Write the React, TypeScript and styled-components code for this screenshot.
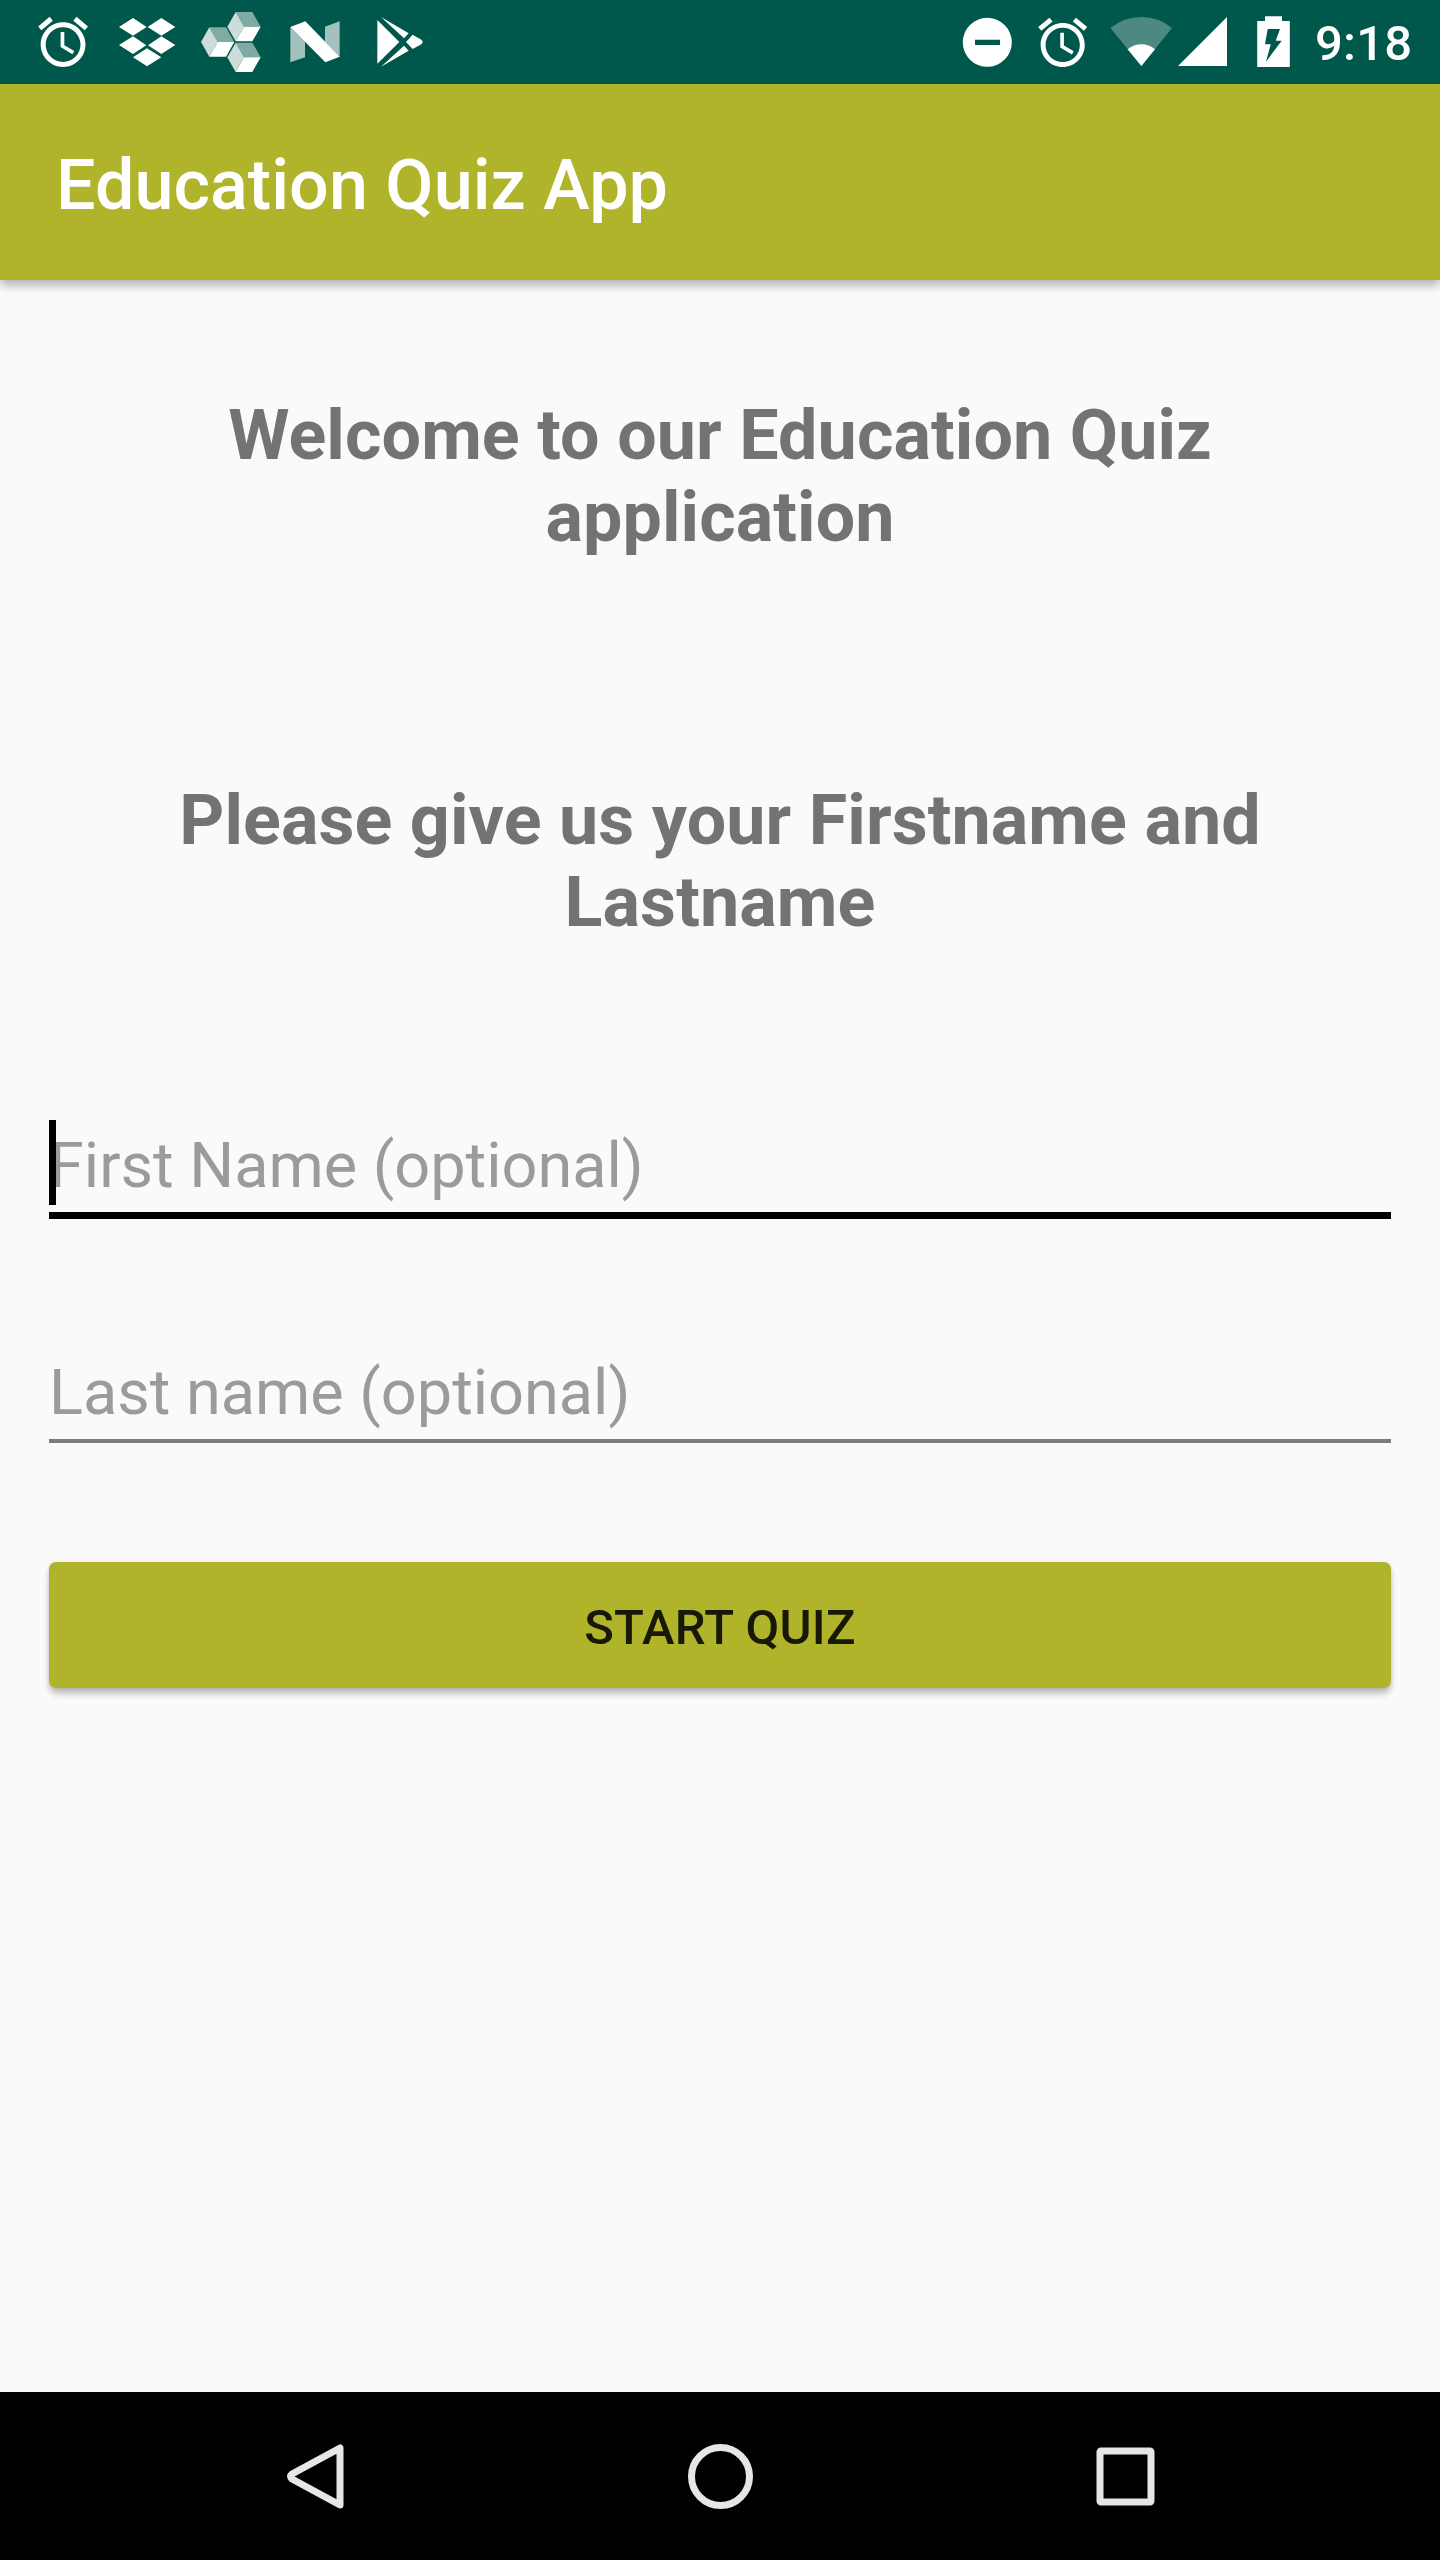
import React from "react";
import styled, { createGlobalStyle } from "styled-components";

const GlobalStyle = createGlobalStyle`
  * { box-sizing: border-box; }
  body { margin: 0; background: #fafafa; }
`;

const Screen = styled.div`
  display: flex;
  flex-direction: column;
  width: 1440px;
  height: 2560px;
  overflow: hidden;
  background: #fafafa;
  font-family: Roboto, "Noto Sans", sans-serif;
`;

const StatusBar = styled.header`
  display: flex;
  justify-content: space-between;
  height: 84px;
  flex: none;
  padding: 0 27px 0 21px;
  background: #00574b;
  color: #fff;
`;

const IconGroup = styled.div`
  display: flex;
  height: 84px;
`;

const StatusIcon = styled.svg<{ $width?: number }>`
  display: block;
  flex: none;
  width: ${(p) => p.$width ?? 84}px;
  height: 84px;
  fill: #fff;
`;

const Clock = styled.time`
  padding-left: 15px;
  width: 113px;
  font-size: 49px;
  font-weight: 500;
  letter-spacing: 0.2px;
  line-height: 88px;
  white-space: nowrap;
`;

const AppBar = styled.div`
  display: flex;
  align-items: center;
  flex: none;
  height: 196px;
  padding: 6px 56px 0;
  background: #afb42b;
  box-shadow: 0 5px 10px rgba(0, 0, 0, 0.3);
`;

const AppTitle = styled.h1`
  margin: 0;
  color: #fff;
  font-size: 70px;
  font-weight: 500;
  letter-spacing: 0.06px;
  line-height: 82px;
`;

const Content = styled.main`
  display: flex;
  flex-direction: column;
  flex: 1;
  padding: 114px 49px 0;
`;

const Heading = styled.h2<{ $after: number }>`
  margin: 0 0 ${(p) => p.$after}px;
  padding: 0 63px;
  color: #737373;
  font-size: 70px;
  font-weight: 700;
  letter-spacing: 0.09px;
  line-height: 82px;
  text-align: center;
`;

const Field = styled.label<{ $active?: boolean; $after: number }>`
  display: flex;
  position: relative;
  height: ${(p) => (p.$active ? 99 : 98)}px;
  padding-top: ${(p) => (p.$active ? 0 : 2)}px;
  margin-bottom: ${(p) => p.$after}px;
  border-bottom: ${(p) => (p.$active ? "7px solid #000" : "4px solid #7c7c7c")};
`;

const Input = styled.input`
  width: 100%;
  height: 90px;
  padding: 0;
  border: 0;
  outline: 0;
  background: transparent;
  font: 400 63px/74px Roboto, sans-serif;
  &::placeholder {
    color: #9b9b9b;
    opacity: 1;
  }
`;

const Caret = styled.span`
  position: absolute;
  left: 0;
  top: 0;
  width: 7px;
  height: 85px;
  background: #000;
`;

const StartButton = styled.button`
  height: 126px;
  padding: 5px 0 0;
  border: 0;
  border-radius: 7px;
  background: #afb42b;
  box-shadow: 0 7px 7px -1px rgba(0, 0, 0, 0.22), 0 1px 5px rgba(0, 0, 0, 0.14);
  color: #171806;
  font: 500 49px/58px Roboto, sans-serif;
  letter-spacing: 0.25px;
`;

const NavBar = styled.nav`
  display: flex;
  justify-content: center;
  flex: none;
  gap: 237px;
  height: 168px;
  background: #000;
`;

const NavIcon = styled.svg`
  display: block;
  width: 168px;
  height: 168px;
  fill: none;
  stroke: #e6e6e6;
  stroke-width: 7;
  stroke-linejoin: round;
`;

const ALARM =
  "M22 5.72l-4.6-3.86-1.29 1.53 4.6 3.86L22 5.72zM7.88 3.39L6.6 1.86 2 5.71l1.29 1.53 4.59-3.85zM12.5 8H11v6l4.75 2.85.75-1.23-4-2.37V8zM12 4c-4.97 0-9 4.03-9 9s4.02 9 9 9c4.97 0 9-4.03 9-9s-4.03-9-9-9zm0 16c-3.87 0-7-3.13-7-7s3.13-7 7-7 7 3.13 7 7-3.13 7-7 7z";

const Cube = ({ x, y }: { x: number; y: number }) => (
  <g transform={`translate(${x} ${y})`}>
    <path d="M-50 0L-25-44L0 0L-25 44Z" fillOpacity=".8" />
    <path d="M-25-44H25L50 0H0Z" fillOpacity=".5" />
    <path d="M0 0H50L25 44H-25Z" />
  </g>
);

export default function App() {
  return (
    <Screen>
      <GlobalStyle />
      <StatusBar>
        <IconGroup>
          <StatusIcon viewBox="21 0 84 84">
            <path transform="translate(33.2 12.2) scale(2.49)" d={ALARM} />
          </StatusIcon>
          <StatusIcon viewBox="315 0 252 252">
            <path d="M399 54L440 81L399 107L357 81ZM484 54L526 81L484 107L443 81ZM399 109L439 136L399 162L357 135ZM484 109L526 135L484 162L444 136ZM441 145L484 172L441 199L399 172Z" />
          </StatusIcon>
          <StatusIcon viewBox="-3 0 252 252">
            <Cube x={83} y={126} />
            <Cube x={162} y={80} />
            <Cube x={162} y={172} />
          </StatusIcon>
          <StatusIcon viewBox="249 0 252 252">
            <path d="M301 81L345 125V172L301 187ZM405 80L449 64V170L405 125Z" fillOpacity=".64" />
            <path d="M301 81L346 64L449 170L406 187Z" />
          </StatusIcon>
          <StatusIcon viewBox="501 0 252 252">
            <path d="M562 60L628 126L562 191ZM573 51L656 100L642 115ZM573 200L656 152L642 137ZM668 104L694 119Q702 126 694 133L668 147L648 126Z" />
          </StatusIcon>
        </IconGroup>
        <IconGroup>
          <StatusIcon $width={70} viewBox="952 0 70 84">
            <path fillRule="evenodd" d="M987.3 17.8a24.5 24.5 0 1 0 0 49a24.5 24.5 0 1 0 0-49ZM975 39.8H1000V45H975Z" />
          </StatusIcon>
          <StatusIcon $width={80} viewBox="1022 0 80 84">
            <path transform="translate(1033.3 13.1) scale(2.45)" d={ALARM} />
          </StatusIcon>
          <StatusIcon $width={73} viewBox="1102 0 73 84">
            <path fillOpacity=".3" d="M1141.4 66L1110.5 28Q1124 17 1141.4 17Q1158.500 17 1172 28Z" />
            <path d="M1141.4 66L1127.700 49.300Q1134 44.300 1141.400 44.300Q1149 44.300 1155 49.300Z" />
          </StatusIcon>
          <StatusIcon $width={70} viewBox="1175 0 70 84">
            <path d="M1178 66H1227V17Z" />
          </StatusIcon>
          <StatusIcon $width={55} viewBox="1245 0 55 84">
            <path fillRule="evenodd" d="M1257.200 21H1265V16.200H1282V21H1289.800V67H1257.200ZM1267.700 29L1265 44.300H1270.700L1266 61.700L1281.700 40.700H1275.700L1280 29Z" />
          </StatusIcon>
          <Clock>9:18</Clock>
        </IconGroup>
      </StatusBar>
      <AppBar>
        <AppTitle>Education Quiz App</AppTitle>
      </AppBar>
      <Content>
        <Heading $after={221}>Welcome to our Education Quiz application</Heading>
        <Heading $after={177}>Please give us your Firstname and Lastname</Heading>
        <Field $active $after={126}>
          <Input placeholder="First Name (optional)" />
          <Caret />
        </Field>
        <Field $after={119}>
          <Input placeholder="Last name (optional)" />
        </Field>
        <StartButton>START QUIZ</StartButton>
      </Content>
      <NavBar>
        <NavIcon viewBox="231 0 168 168">
          <path d="M340 56V113L292 87Q289 84.500 292 82Z" />
        </NavIcon>
        <NavIcon viewBox="635.5 0 168 168">
          <circle cx="720" cy="84.500" r="29" />
        </NavIcon>
        <NavIcon viewBox="1041 0 168 168">
          <rect x="1100" y="59" width="51" height="51" rx="1" />
        </NavIcon>
      </NavBar>
    </Screen>
  );
}
